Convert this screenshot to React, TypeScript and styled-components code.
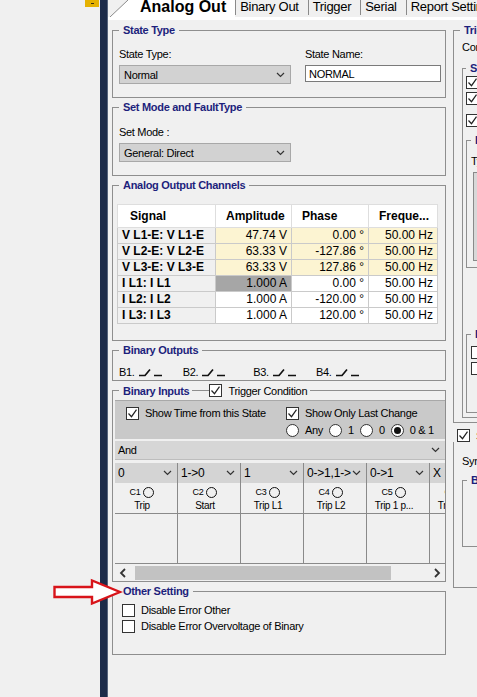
import styled, { createGlobalStyle } from 'styled-components';

const GlobalStyle = createGlobalStyle`
  html, body {
    margin: 0;
    padding: 0;
    background: #f0f0f0;
    overflow: hidden;
  }
  body {
    font-family: "Liberation Sans", Arial, sans-serif;
    font-size: 11px;
    letter-spacing: -0.3px;
    color: #000;
  }
`;

type Channel = { signal: string; amp: string; phase: string; freq: string; volt?: boolean; picked?: boolean };

const channels: Channel[] = [
  { signal: 'V L1-E: V L1-E', amp: '47.74 V', phase: '0.00 °', freq: '50.00 Hz', volt: true },
  { signal: 'V L2-E: V L2-E', amp: '63.33 V', phase: '-127.86 °', freq: '50.00 Hz', volt: true },
  { signal: 'V L3-E: V L3-E', amp: '63.33 V', phase: '127.86 °', freq: '50.00 Hz', volt: true },
  { signal: 'I L1: I L1', amp: '1.000 A', phase: '0.00 °', freq: '50.00 Hz', picked: true },
  { signal: 'I L2: I L2', amp: '1.000 A', phase: '-120.00 °', freq: '50.00 Hz' },
  { signal: 'I L3: I L3', amp: '1.000 A', phase: '120.00 °', freq: '50.00 Hz' },
];

const inputs = [
  { edge: '0', id: 'C1', name: 'Trip' },
  { edge: '1->0', id: 'C2', name: 'Start' },
  { edge: '1', id: 'C3', name: 'Trip L1' },
  { edge: '0->1,1->', id: 'C4', name: 'Trip L2' },
  { edge: '0->1', id: 'C5', name: 'Trip 1 p...' },
  { edge: 'X', id: 'C6', name: 'Trip 3 p...' },
];

// B1..B4 sit at uneven distances in the original form
const outputs = [
  { name: 'B1.', gap: 0 },
  { name: 'B2.', gap: 20 },
  { name: 'B3.', gap: 27 },
  { name: 'B4.', gap: 19 },
];

const Chevron = () => (
  <svg width="9" height="6" viewBox="0 0 9 6">
    <path d="M1 1l3.5 3.5L8 1" fill="none" stroke="#333" strokeWidth="1.2" />
  </svg>
);

const Arrow = ({ dir }: { dir: 'left' | 'right' }) => (
  <svg width="8" height="10" viewBox="0 0 8 10">
    <path d={dir === 'left' ? 'M6 1L2 5l4 4' : 'M2 1l4 4-4 4'} fill="none" stroke="#333" strokeWidth="1.8" />
  </svg>
);

const Contact = () => (
  <svg width="24" height="9" viewBox="0 0 24 9">
    <path d="M0 7.5h6l5-6M15 7.5h8" fill="none" stroke="#111" strokeWidth="1.7" />
  </svg>
);

const Check = ({ on }: { on?: boolean }) => (
  <CheckBox>
    {on && (
      <svg width="11" height="11" viewBox="0 0 11 11">
        <path d="M1.5 5.5l3 3.2 5-7" fill="none" stroke="#222" strokeWidth="1.2" />
      </svg>
    )}
  </CheckBox>
);

const Option = ({ on, label }: { on?: boolean; label: string }) => (
  <OptionItem>
    <RadioDot $on={on} />
    {label}
  </OptionItem>
);

const App = () => (
  <Screen>
    <GlobalStyle />
    <SideStrip>
      <PinTab />
    </SideStrip>
    <DockBar />
    <Main>
      <TabBar>
        <TabCorner width="18" height="17" viewBox="0 0 18 17">
          <path d="M0 17L18 0V17Z" fill="#fff" />
          <path d="M0 17L18 0" stroke="#8a8a8a" strokeWidth="1" />
        </TabCorner>
        <ActiveTab>Analog Out</ActiveTab>
        {['Binary Out', 'Trigger', 'Serial', 'Report Setting'].map(t => (
          <Tab key={t}>{t}</Tab>
        ))}
      </TabBar>
      <TabEdge />
      <Body>
        <LeftCol>
          <Group>
            <Legend>State Type</Legend>
            <FieldRow>
              <Field>
                <Label>State Type:</Label>
                <DropDown>
                  Normal
                  <Chevron />
                </DropDown>
              </Field>
              <Field>
                <Label>State Name:</Label>
                <TextBox>NORMAL</TextBox>
              </Field>
            </FieldRow>
          </Group>

          <Group $pad="12px 6px 13px">
            <Legend>Set Mode and FaultType</Legend>
            <Field>
              <Label>Set Mode :</Label>
              <DropDown $w={172}>
                General: Direct
                <Chevron />
              </DropDown>
            </Field>
          </Group>

          <Group $pad="13px 6px 16px 4px">
            <Legend $shift={2}>Analog Output Channels</Legend>
            <ChannelTable>
              <colgroup>
                <Col $w={98} />
                <Col $w={76} />
                <Col $w={77} />
                <Col $w={69} />
              </colgroup>
              <thead>
                <tr>
                  <HeadCell $first>Signal</HeadCell>
                  <HeadCell>Amplitude</HeadCell>
                  <HeadCell>Phase</HeadCell>
                  <HeadCell>Freque...</HeadCell>
                </tr>
              </thead>
              <tbody>
                {channels.map(c => (
                  <tr key={c.signal}>
                    <SignalCell>{c.signal}</SignalCell>
                    <ValueCell $tone={c.volt ? 'volt' : c.picked ? 'picked' : 'plain'}>{c.amp}</ValueCell>
                    <ValueCell $tone={c.volt ? 'volt' : 'plain'}>{c.phase}</ValueCell>
                    <ValueCell $tone={c.volt ? 'volt' : 'plain'}>{c.freq}</ValueCell>
                  </tr>
                ))}
              </tbody>
            </ChannelTable>
          </Group>

          <Group $pad="9px 6px 1px">
            <Legend>Binary Outputs</Legend>
            <OutputRow>
              {outputs.map(b => (
                <OutputItem key={b.name} $gap={b.gap}>
                  {b.name}
                  <Contact />
                </OutputItem>
              ))}
            </OutputRow>
          </Group>

          <Group $pad="3px 0 0 2px">
            <FlexLegend $shift={4}>
              <span>Binary Inputs</span>
              <LegendRule />
              <Check on />
              <PlainText>Trigger Condition</PlainText>
            </FlexLegend>
            <FilterPanel>
              <OptionItem>
                <Check on />
                Show Time from this State
              </OptionItem>
              <OptionItem>
                <Check on />
                Show Only Last Change
              </OptionItem>
              <span />
              <RadioRow>
                <Option label="Any" />
                <Option label="1" />
                <Option label="0" />
                <Option on label="0 & 1" />
              </RadioRow>
            </FilterPanel>
            <LogicBar>
              And
              <Chevron />
            </LogicBar>
            <InputGrid>
              {inputs.map(i => (
                <InputColumn key={i.id}>
                  <EdgeSelect>
                    <EdgeText>{i.edge}</EdgeText>
                    <Chevron />
                  </EdgeSelect>
                  <InputHead>
                    <InputId>
                      {i.id}
                      <Lamp />
                    </InputId>
                    <InputName>{i.name}</InputName>
                  </InputHead>
                  <InputBody />
                </InputColumn>
              ))}
            </InputGrid>
            <ScrollBar>
              <Arrow dir="left" />
              <ScrollTrack>
                <Thumb />
              </ScrollTrack>
              <Arrow dir="right" />
            </ScrollBar>
          </Group>

          <Group $pad="5px 6px 20px 9px">
            <Legend $shift={-3}>Other Setting</Legend>
            <OptionLine>
              <Check />
              Disable Error Other
            </OptionLine>
            <OptionLine>
              <Check />
              Disable Error Overvoltage of Binary
            </OptionLine>
          </Group>
        </LeftCol>

        <RightCol>
          <Group $pad="4px 8px 4px 8px">
            <Legend $shift={-2}>Trigger</Legend>
            <Label>Condition:</Label>
            <Group $pad="0 3px 4px 3px" $top={8}>
              <Legend>Stop</Legend>
              <OptionLine>
                <Check on />
                Time
              </OptionLine>
              <OptionLine>
                <Check on />
                Binary
              </OptionLine>
              <OptionLine $top={6}>
                <Check on />
                Manual
              </OptionLine>
              <Group $pad="8px 4px 6px 4px" $top={6}>
                <Legend>Binary</Legend>
                <Label>Type</Label>
                <GreyBox />
              </Group>
              <Group $pad="4px 4px 36px 4px" $top={60}>
                <Legend>Binary</Legend>
                <OptionLine>
                  <Check />
                  Input 1
                </OptionLine>
                <OptionLine>
                  <Check />
                  Input 2
                </OptionLine>
              </Group>
            </Group>
          </Group>
          <Group $pad="12px 8px 40px 8px">
            <FlexLegend $shift={-9}>
              <Check on />
              <PlainText>Sync</PlainText>
            </FlexLegend>
            <Label>Sync Mode</Label>
            <Group $pad="10px 4px 50px 4px" $top={6}>
              <Legend>Base</Legend>
            </Group>
          </Group>
        </RightCol>
      </Body>
    </Main>
    <Callout width="70" height="28" viewBox="0 0 70 28">
      <path d="M1.5 9H39V2.5L67 14 39 25.5V19H1.5Z" fill="#fff" stroke="#d8141a" strokeWidth="2.4" strokeLinejoin="miter" />
    </Callout>
  </Screen>
);

export default App;

const Screen = styled.div`
  position: relative;
  display: flex;
  width: 477px;
  height: 697px;
  overflow: hidden;
  background: #f0f0f0;
`;

const SideStrip = styled.div`
  width: 100px;
  flex: none;
  display: flex;
  flex-direction: column;
  align-items: flex-end;
`;

const PinTab = styled.div`
  width: 14px;
  height: 7px;
  margin-right: 1px;
  background: #e5b202;
  display: flex;
  justify-content: center;
  align-items: center;
  &::after {
    content: '';
    width: 3px;
    height: 1px;
    background: #3a2f10;
  }
`;

const DockBar = styled.div`
  width: 7px;
  flex: none;
  background: #1c2b49;
  border-right: 1px solid #56647c;
`;

const Main = styled.div`
  flex: 1;
  min-width: 0;
  display: flex;
  flex-direction: column;
  overflow: hidden;
`;

const TabBar = styled.div`
  height: 17px;
  display: flex;
  padding-left: 2px;
  white-space: nowrap;
  & > * {
    flex: none;
  }
`;

const TabCorner = styled.svg`
  display: block;
`;

const ActiveTab = styled.div`
  background: #fff;
  padding: 0 9px 0 12px;
  font-size: 16px;
  font-weight: bold;
  letter-spacing: 0;
  line-height: 14px;
`;

const Tab = styled.div`
  border-left: 1px solid #8a8a8a;
  height: 15px;
  padding: 0 9px 0 4px;
  font-size: 13px;
  line-height: 14px;
`;

const TabEdge = styled.div`
  height: 3px;
  background: #fff;
`;

const Body = styled.div`
  display: flex;
  align-items: flex-start;
  gap: 7px;
  padding: 4px 0 0 4px;
`;

const LeftCol = styled.div`
  width: 334px;
  flex: none;
  display: flex;
  flex-direction: column;
  gap: 3px;
`;

const RightCol = styled.div`
  width: 200px;
  flex: none;
  display: flex;
  flex-direction: column;
  gap: 6px;
`;

const Group = styled.fieldset<{ $pad?: string; $top?: number }>`
  margin: ${p => p.$top ?? 0}px 0 0;
  min-width: 0;
  border: 1px solid #8e8e8e;
  padding: ${p => p.$pad ?? '11px 6px 13px'};
`;

const Legend = styled.legend<{ $shift?: number }>`
  margin-left: ${p => p.$shift ?? 0}px;
  padding: 0 4px;
  height: 12px;
  line-height: 12px;
  font-size: 11px;
  font-weight: bold;
  color: #1d1f7c;
  white-space: nowrap;
`;

const FlexLegend = styled(Legend)`
  display: flex;
  align-items: center;
  height: 13px;
  padding-right: 3px;
`;

const LegendRule = styled.span`
  width: 17px;
  height: 1px;
  margin-left: 3px;
  background: #8e8e8e;
`;

const PlainText = styled.span`
  margin-left: 6px;
  font-weight: normal;
  color: #000;
`;

const FieldRow = styled.div`
  display: grid;
  grid-template-columns: 172px 136px;
  column-gap: 14px;
  align-items: start;
`;

const Field = styled.div`
  display: flex;
  flex-direction: column;
`;

const Label = styled.div`
  line-height: 14px;
  margin-bottom: 4px;
  white-space: nowrap;
`;

const DropDown = styled.div<{ $w?: number }>`
  width: ${p => (p.$w ? `${p.$w}px` : 'auto')};
  height: 19px;
  box-sizing: border-box;
  display: flex;
  align-items: center;
  justify-content: space-between;
  padding: 0 5px 0 4px;
  background: #d2d2d2;
  border: 1px solid #a8a8a8;
`;

const TextBox = styled.div`
  height: 17px;
  box-sizing: border-box;
  display: flex;
  align-items: center;
  padding-left: 3px;
  background: #fff;
  border: 1px solid #7a7a7a;
`;

const ChannelTable = styled.table`
  width: 320px;
  table-layout: fixed;
  border-collapse: collapse;
  font-size: 12px;
  letter-spacing: 0;
  border: 1px solid #b4b4b4;
`;

const Col = styled.col<{ $w: number }>`
  width: ${p => p.$w}px;
`;

const HeadCell = styled.th<{ $first?: boolean }>`
  height: 22px;
  padding: 0 0 0 ${p => (p.$first ? 12 : 10)}px;
  text-align: left;
  font-weight: bold;
  background: #fff;
  border: 1px solid #dedede;
  white-space: nowrap;
  overflow: hidden;
`;

const SignalCell = styled.td`
  height: 15px;
  padding: 0 0 0 4px;
  line-height: 15px;
  font-weight: bold;
  background: #f0f0f0;
  border: 1px solid #cacaca;
  white-space: nowrap;
  overflow: hidden;
`;

const toneColor = { plain: '#fff', volt: '#fcf4d2', picked: '#a6a6a6' };

const ValueCell = styled.td<{ $tone: keyof typeof toneColor }>`
  height: 15px;
  padding: 0 4px 0 0;
  line-height: 15px;
  text-align: right;
  background: ${p => toneColor[p.$tone]};
  border: 1px solid #cacaca;
  white-space: nowrap;
`;

const OutputRow = styled.div`
  display: flex;
  line-height: 14px;
`;

const OutputItem = styled.div<{ $gap: number }>`
  display: flex;
  align-items: center;
  gap: 4px;
  margin-left: ${p => p.$gap}px;
`;

const CheckBox = styled.span`
  width: 13px;
  height: 13px;
  flex: none;
  box-sizing: border-box;
  display: inline-flex;
  align-items: center;
  justify-content: center;
  background: #fff;
  border: 1px solid #333;
`;

const RadioDot = styled.span<{ $on?: boolean }>`
  width: 13px;
  height: 13px;
  flex: none;
  box-sizing: border-box;
  display: inline-flex;
  align-items: center;
  justify-content: center;
  border-radius: 50%;
  background: #fff;
  border: 1px solid #333;
  &::after {
    content: '';
    width: 7px;
    height: 7px;
    border-radius: 50%;
    background: ${p => (p.$on ? '#111' : 'transparent')};
  }
`;

const FilterPanel = styled.div`
  display: grid;
  grid-template-columns: 160px 1fr;
  row-gap: 3px;
  padding: 5px 0 2px 11px;
  background: #c9c9c9;
  border-top: 1px solid #a8a8a8;
`;

const OptionItem = styled.div`
  display: flex;
  align-items: center;
  gap: 6px;
  height: 14px;
  white-space: nowrap;
`;

const RadioRow = styled.div`
  display: flex;
  gap: 6px;
`;

const LogicBar = styled.div`
  margin-top: 2px;
  height: 19px;
  box-sizing: border-box;
  display: flex;
  align-items: center;
  justify-content: space-between;
  padding: 0 5px 0 3px;
  background: #d6d6d6;
  border-bottom: 1px solid #bdbdbd;
`;

const InputGrid = styled.div`
  margin-top: 3px;
  display: grid;
  grid-template-columns: repeat(6, 63px);
  overflow: hidden;
  border-bottom: 1px solid #8a8a8a;
`;

const InputColumn = styled.div`
  display: flex;
  flex-direction: column;
  border-right: 1px solid #8a8a8a;
`;

const EdgeSelect = styled.div`
  height: 20px;
  box-sizing: border-box;
  display: flex;
  align-items: center;
  justify-content: space-between;
  padding: 0 5px 0 3px;
  background: #d4d4d4;
  font-size: 12px;
  letter-spacing: -0.2px;
`;

const EdgeText = styled.span`
  overflow: hidden;
  white-space: nowrap;
  flex: 1;
`;

const InputHead = styled.div`
  height: 31px;
  box-sizing: border-box;
  display: flex;
  flex-direction: column;
  align-items: center;
  padding: 2px 8px 0 0;
  border-bottom: 1px solid #8a8a8a;
`;

const InputId = styled.div`
  display: flex;
  align-items: center;
  gap: 3px;
  height: 14px;
  font-size: 9px;
`;

const Lamp = styled.span`
  width: 11px;
  height: 11px;
  box-sizing: border-box;
  border-radius: 50%;
  border: 1.7px solid #111;
`;

const InputName = styled.div`
  font-size: 10px;
  line-height: 13px;
  white-space: nowrap;
`;

const InputBody = styled.div`
  height: 49px;
`;

const ScrollBar = styled.div`
  height: 17px;
  display: flex;
  align-items: center;
  padding: 0 4px;
  gap: 8px;
`;

const ScrollTrack = styled.div`
  flex: 1;
  height: 14px;
`;

const Thumb = styled.div`
  width: 256px;
  height: 100%;
  background: #c2c2c2;
`;

const OptionLine = styled.div<{ $top?: number }>`
  margin-top: ${p => p.$top ?? 0}px;
  display: flex;
  align-items: center;
  gap: 6px;
  height: 16px;
  white-space: nowrap;
`;

const GreyBox = styled.div`
  height: 87px;
  margin-left: 2px;
  background: #d8d8d8;
  border: 1px solid #8a8a8a;
`;

const Callout = styled.svg`
  position: absolute;
  left: 53px;
  top: 578px;
`;
